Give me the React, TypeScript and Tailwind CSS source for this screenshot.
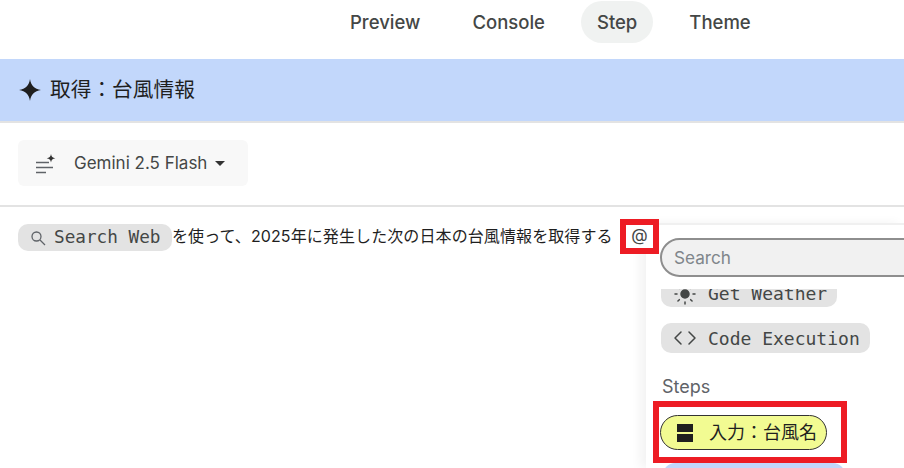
import { Code, Sun } from "lucide-react";

const cjk = "font-['Inter','Noto_Sans_CJK_JP',sans-serif]";
const mono = "font-['DejaVu_Sans_Mono','Noto_Sans_CJK_JP',monospace]";

const tabs = ["Preview", "Console", "Step", "Theme"];

function Tabs() {
  return (
    <nav className="flex h-[59px] items-start gap-5 pl-[334px] pt-px">
      {tabs.map((t) => (
        <div
          key={t}
          className={`flex h-[42px] w-auto items-center justify-center rounded-full px-4 pt-px text-[18.500px] font-medium text-[#444746] ${
            t === "Step" ? "bg-[#f0f2f1]" : ""
          }`}
        >
          {t}
        </div>
      ))}
    </nav>
  );
}

function Spark({ className }: { className: string }) {
  return (
    <svg viewBox="0 0 24 24" className={className} fill="currentColor">
      <path d="M12 0c.9 7 4.800 11.100 12 12-7.200.9-11.100 5-12 12-.9-7-4.800-11.100-12-12 7.200-.9 11.100-5 12-12z" />
    </svg>
  );
}

function ModelIcon() {
  return (
    <svg viewBox="0 0 22 22" className="h-[22px] w-[22px] text-[#5f6368]" fill="none">
      <path d="M1 9.500h13M1 14.500h17M1 19.500h10" stroke="currentColor" strokeWidth="1.300" />
      <path d="M16 1c.4 2.700 1.600 3.900 4.300 4.300-2.700.4-3.900 1.600-4.300 4.300-.4-2.700-1.600-3.900-4.300-4.300 2.700-.4 3.900-1.600 4.300-4.300z" fill="#333" />
    </svg>
  );
}

function Popup() {
  return (
    <div className="absolute left-[646px] top-[223px] h-[245px] w-[258px] overflow-hidden border-t-2 border-[#f0f0f0] bg-white pl-[14px] pt-[13px] shadow-[-6px_0_10px_rgba(0,0,0,0.05)]">
      <div className={`flex h-[39px] w-[300px] items-center rounded-full border-2 border-[#8e8e8e] bg-[#f1f1f1] pl-3 text-[17.200px] text-[#80868b] ${cjk}`}>
        Search
      </div>
      <div className="mt-[12px] h-[190px] overflow-hidden">
        <div className={`-mt-[12px] ml-px flex h-[30px] w-[176px] items-center rounded-b-[10px] bg-[#e3e3e3] pl-[12px] pt-[3px] text-[18px] text-[#444746] ${mono}`}>
          <Sun className="h-[24px] w-[24px] fill-[#444746]" strokeWidth={1.500} />
          <span className="ml-[11px]">Get Weather</span>
        </div>
        <div className={`ml-px mt-[16px] flex h-[30px] w-[209px] items-center gap-[11px] rounded-[10px] bg-[#e3e3e3] pl-[12px] text-[18px] text-[#444746] ${mono}`}>
          <Code className="h-[24px] w-[24px]" strokeWidth={1.500} />
          <span>Code Execution</span>
        </div>
        <div className={`ml-[2px] mt-[23px] text-[18px] leading-[22px] text-[#5f6368] ${cjk}`}>Steps</div>
        <div className={`mt-[17px] flex h-[35px] w-[167px] items-center gap-[16px] rounded-full border border-[#333] bg-[#f2fb92] pl-4 text-[18px] text-[#1f1f1f] ${cjk}`}>
          <span className="flex h-[18px] w-[16px] flex-col justify-between">
            <span className="h-[8px] bg-[#1f1f1f]" />
            <span className="h-[8px] bg-[#1f1f1f]" />
          </span>
          <span>入力：台風名</span>
        </div>
        <div className="ml-[3px] mt-[13px] h-[20px] w-[182px] rounded-t-[12px] bg-[#c2d7fb]" />
      </div>
    </div>
  );
}

export default function App() {
  return (
    <div className={`relative h-[468px] w-[904px] overflow-hidden bg-white ${cjk}`}>
      <Tabs />
      <div className="flex h-[64px] items-center gap-[9px] border-b-2 border-[#e3e3e3] bg-[#c2d7fb] pl-[19px] text-[20.700px] text-[#1f1f1f]">
        <Spark className="h-[22px] w-[22px]" />
        <span>取得：台風情報</span>
      </div>
      <div className="flex h-[84px] items-center border-b-2 border-[#e3e3e3] pb-[2px] pl-[18px]">
        <div className="flex h-[46px] w-[230px] items-center rounded-[6px] bg-[#f8f8f8] pl-[17px] pt-px text-[17px] text-[#444746]">
          <ModelIcon />
          <span className="ml-[17px]">Gemini 2.5 Flash</span>
          <span className="ml-[8px] h-0 w-0 border-x-[5px] border-t-[5px] border-x-transparent border-t-[#333]" />
        </div>
      </div>
      <div className="flex items-center pl-[18px] pt-[17px] text-[16px] text-[#1f1f1f]">
        <div className={`flex h-[27px] w-[154px] items-center gap-[8px] rounded-[10px] bg-[#e3e3e3] pl-3 text-[17.700px] text-[#444746] ${mono}`}>
          <svg viewBox="0 0 16 16" className="h-[16px] w-[16px]" fill="none" stroke="#5f6368" strokeWidth="1.300">
            <circle cx="6.500" cy="6.500" r="4.500" />
            <path d="M10 10l5 5" />
          </svg>
          <span>Search Web</span>
        </div>
        <span className="pb-[3px] tracking-[0.1px]">を使って、2025年に発生した次の日本の台風情報を取得する</span>
      </div>
      <Popup />
      {/* annotations */}
      <div className="absolute left-[620px] top-[219px] flex h-[35px] w-[39px] items-center justify-center border-[6px] border-[#ed1c24] bg-white pb-[2px] text-[17px] text-[#444746]">
        @
      </div>
      <div className="absolute left-[653px] top-[401px] h-[62px] w-[194px] border-[6px] border-[#ed1c24]" />
    </div>
  );
}
